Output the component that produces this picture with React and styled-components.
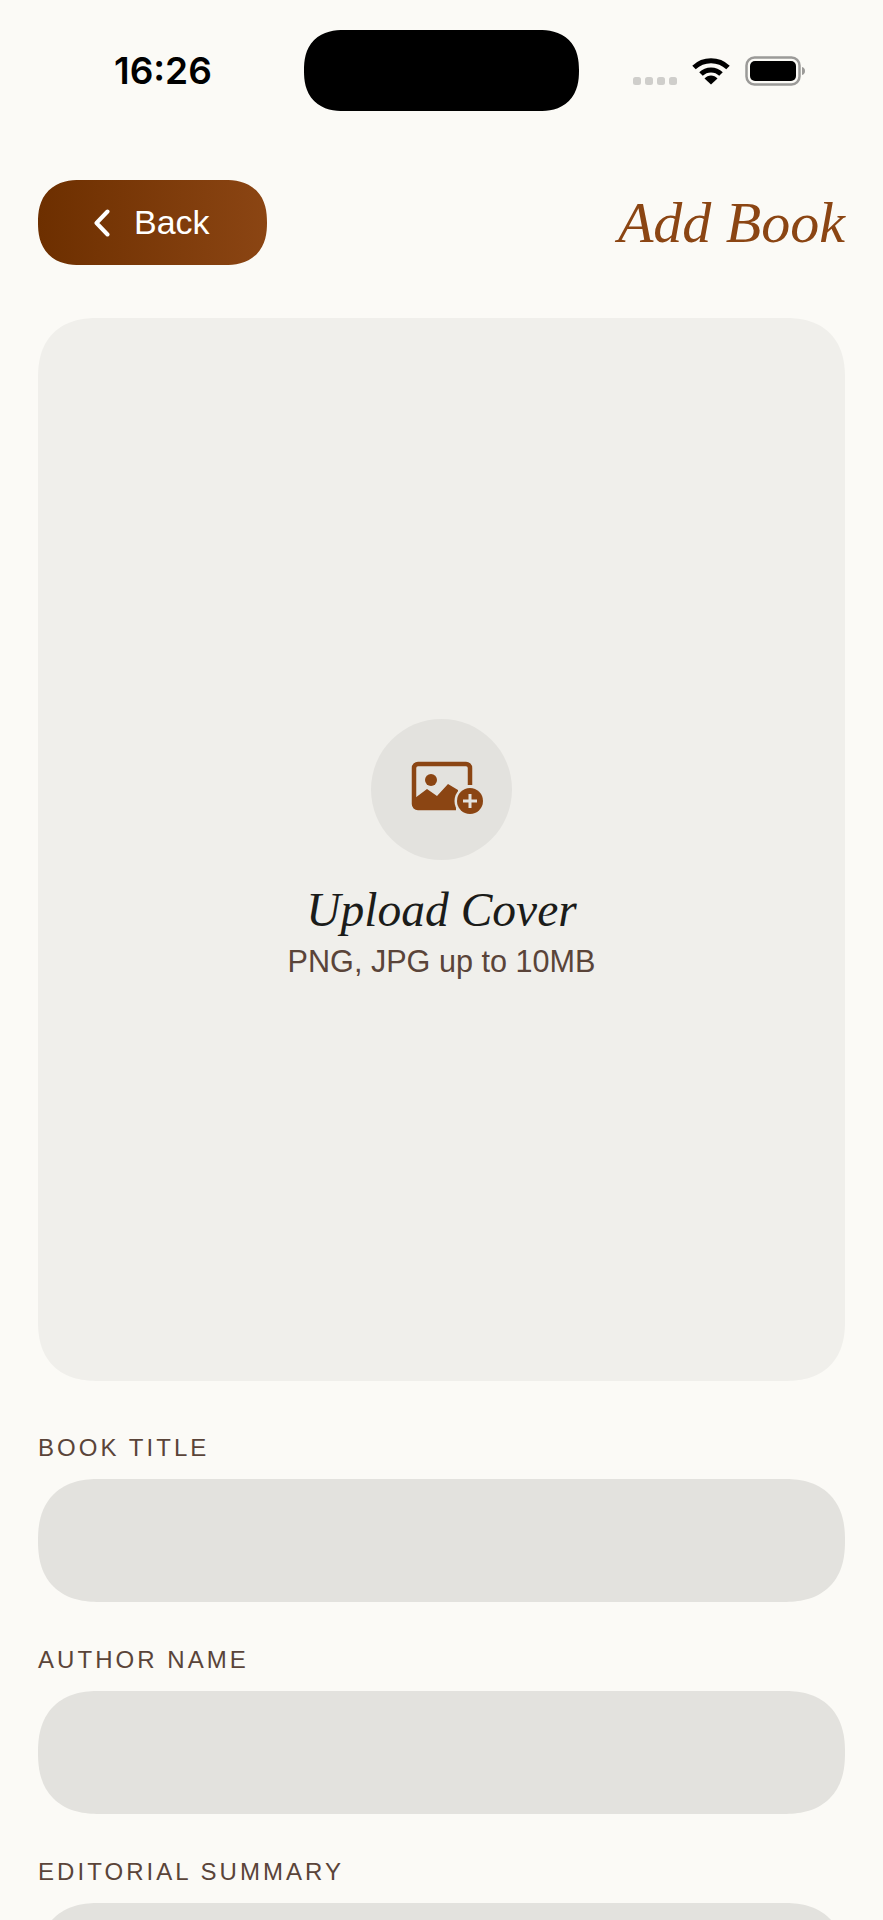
import React from "react";
import styled, { createGlobalStyle } from "styled-components";

const GlobalStyle = createGlobalStyle`
  html, body {
    margin: 0;
    padding: 0;
    background: #fbfaf6;
    overflow: hidden;
  }
  * { box-sizing: border-box; }
`;

const Page = styled.div`
  width: 883px;
  height: 1920px;
  overflow: hidden;
  background: #fbfaf6;
  font-family: "Liberation Sans", Arial, sans-serif;
`;

const StatusBar = styled.div`
  display: grid;
  grid-template-columns: 304px 275px 1fr;
  align-items: center;
  padding-top: 30px;
`;

const Time = styled.div`
  padding-left: 114px;
  font-family: Inter, "Liberation Sans", sans-serif;
  font-size: 37px;
  font-weight: 600;
  line-height: 1;
  color: #000;
`;

const Island = styled.div`
  height: 81px;
  background: #000;
  border-radius: 40px;
  corner-shape: superellipse(1.25);
`;

const StatusIcons = styled.div`
  display: flex;
  align-items: center;
  gap: 15px;
  padding-left: 54px;
`;

const SignalDots = styled.div`
  display: flex;
  gap: 4px;
  margin-top: 20px;
`;

const Dot = styled.span`
  width: 8px;
  height: 8px;
  border-radius: 2.5px;
  background: #cfcecb;
`;

const Header = styled.header`
  display: flex;
  align-items: center;
  justify-content: space-between;
  margin-top: 69px;
  padding: 0 38px;
`;

const BackButton = styled.button`
  display: flex;
  align-items: center;
  gap: 23px;
  width: 229px;
  height: 85px;
  padding: 0 0 0 55px;
  border: 0;
  border-radius: 42px;
  corner-shape: superellipse(1.25);
  background: linear-gradient(90deg, #6d2f00, #8b4513);
  color: #fff;
  font-family: inherit;
  font-size: 34px;
`;

const Heading = styled.h1`
  margin: 0;
  font-family: "Liberation Serif", Georgia, serif;
  font-style: italic;
  font-weight: 400;
  font-size: 58px;
  line-height: 1;
  color: #8b4513;
`;

const Content = styled.main`
  display: flex;
  flex-direction: column;
  padding: 0 38px;
  margin-top: 53px;
`;

const CoverUpload = styled.div`
  display: flex;
  flex-direction: column;
  align-items: center;
  justify-content: center;
  height: 1063px;
  background: #f0efeb;
  border-radius: 60px;
  corner-shape: superellipse(1.25);
`;

const IconCircle = styled.div`
  display: flex;
  align-items: center;
  justify-content: center;
  width: 141px;
  height: 141px;
  padding-left: 12px;
  padding-bottom: 2px;
  border-radius: 50%;
  background: #e3e2de;
`;

const UploadTitle = styled.div`
  margin-top: 23px;
  font-family: "Liberation Serif", Georgia, serif;
  font-style: italic;
  font-size: 47.5px;
  line-height: 54px;
  color: #1b1c1a;
`;

const UploadHint = styled.div`
  margin-top: 4px;
  font-size: 30.6px;
  line-height: 40px;
  color: #5a4439;
`;

const Field = styled.div`
  display: flex;
  flex-direction: column;
  margin-top: ${(p) => p.$gap}px;
`;

const Label = styled.label`
  font-size: 24px;
  line-height: 28px;
  letter-spacing: 3.05px;
  color: #5a4439;
  margin-bottom: 17px;
`;

const Input = styled.div`
  height: 123px;
  background: #e3e2de;
  border-radius: 61px;
  corner-shape: superellipse(1.25);
`;

function WifiIcon() {
  return (
    <svg width="38" height="28" viewBox="0 0 38 28">
      <path d="M2 10.5C11.5 1.5 26.5 1.5 36 10.5" fill="none" stroke="#000" strokeWidth="5" />
      <path d="M9 17C14.5 11.5 23.5 11.5 29 17" fill="none" stroke="#000" strokeWidth="5" />
      <path d="M12.5 21.5C16 17.5 22 17.5 25.5 21.5L19 27.5Z" fill="#000" />
    </svg>
  );
}

function BatteryIcon() {
  return (
    <svg width="60" height="30" viewBox="0 0 60 30">
      <rect x="1.5" y="1.5" width="53" height="27" rx="8" fill="none" stroke="#9b9a98" strokeWidth="2.5" />
      <rect x="5" y="5" width="46" height="20" rx="5" fill="#000" />
      <path d="M57 11c2 .5 3 2 3 4s-1 3.500-3 4Z" fill="#9b9a98" />
    </svg>
  );
}

function ChevronIcon() {
  return (
    <svg width="18" height="28" viewBox="0 0 18 28">
      <path d="M14.500 2.500L3.500 14L14.500 25.500" fill="none" stroke="#fff" strokeWidth="4" strokeLinecap="round" strokeLinejoin="round" />
    </svg>
  );
}

function AddImageIcon() {
  return (
    <svg width="74" height="54" viewBox="0 0 74 54">
      <path d="M59 24V7a4 4 0 0 0-4-4H7a4 4 0 0 0-4 4v36a4 4 0 0 0 4 4h38" fill="none" stroke="#8b4513" strokeWidth="4.500" />
      <circle cx="20" cy="19" r="6" fill="#8b4513" />
      <path d="M4 37L16 28L26 35L37 23L47 29V47H4Z" fill="#8b4513" />
      <circle cx="59" cy="40" r="15.500" fill="#e3e2de" />
      <circle cx="59" cy="40" r="13" fill="#8b4513" />
      <path d="M59 33V47M52 40H66" stroke="#e3e2de" strokeWidth="3" />
    </svg>
  );
}

const fields = [
  { label: "BOOK TITLE", gap: 53 },
  { label: "AUTHOR NAME", gap: 44 },
  { label: "EDITORIAL SUMMARY", gap: 44 },
];

export default function App() {
  return (
    <Page>
      <GlobalStyle />
      <StatusBar>
        <Time>16:26</Time>
        <Island />
        <StatusIcons>
          <SignalDots>
            <Dot />
            <Dot />
            <Dot />
            <Dot />
          </SignalDots>
          <WifiIcon />
          <BatteryIcon />
        </StatusIcons>
      </StatusBar>
      <Header>
        <BackButton>
          <ChevronIcon />
          Back
        </BackButton>
        <Heading>Add Book</Heading>
      </Header>
      <Content>
        <CoverUpload>
          <IconCircle>
            <AddImageIcon />
          </IconCircle>
          <UploadTitle>Upload Cover</UploadTitle>
          <UploadHint>PNG, JPG up to 10MB</UploadHint>
        </CoverUpload>
        {fields.map((f) => (
          <Field key={f.label} $gap={f.gap}>
            <Label>{f.label}</Label>
            <Input />
          </Field>
        ))}
      </Content>
    </Page>
  );
}
